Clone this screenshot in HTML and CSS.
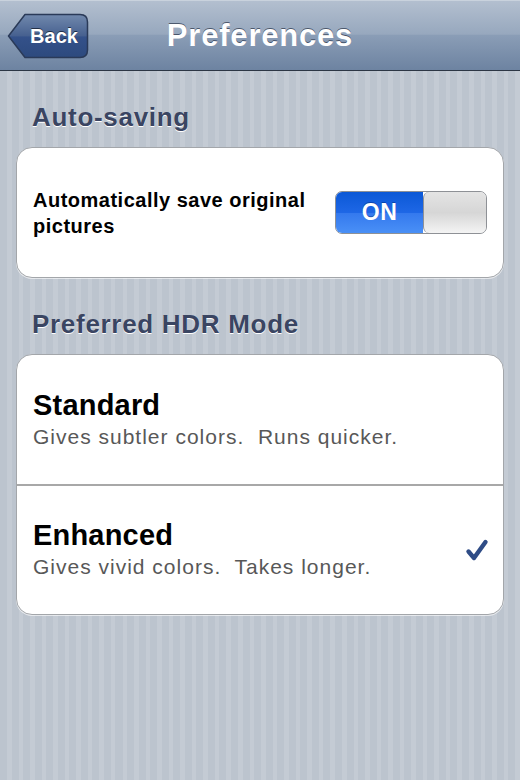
FILE: index.html
```html
<!DOCTYPE html>
<html lang="en">
<head>
  <meta charset="UTF-8">
  <meta name="viewport" content="width=device-width, initial-scale=1.0">
  <title>Preferences</title>
  <link rel="stylesheet" href="styles.css">
</head>
<body>
  <div class="navbar">
    <a href="#" class="back-button">
      <svg class="back-shape" width="84" height="48" viewBox="0 0 84 48">
        <defs>
          <linearGradient id="backFill" x1="0" y1="0" x2="0" y2="1">
            <stop offset="0" stop-color="#7189ad"/>
            <stop offset="0.5" stop-color="#46608f"/>
            <stop offset="0.52" stop-color="#34518a"/>
            <stop offset="1" stop-color="#2d4a7e"/>
          </linearGradient>
        </defs>
        <path d="M2.5 24 L19 2.5 H74 Q81.5 2.5 81.5 10 V38 Q81.5 45.5 74 45.5 H19 Z" fill="url(#backFill)" stroke="#2a3a58" stroke-width="1.5" stroke-linejoin="round"/>
      </svg>
      <span>Back</span>
    </a>
    <h1>Preferences</h1>
  </div>

  <div class="content">
    <h2 class="section-title">Auto-saving</h2>
    <div class="group">
      <div class="row switch-row">
        <div class="row-label">Automatically save original pictures</div>
        <div class="switch">
          <div class="switch-on">ON</div>
          <div class="switch-knob"></div>
        </div>
      </div>
    </div>

    <h2 class="section-title">Preferred HDR Mode</h2>
    <div class="group">
      <div class="row option">
        <div class="option-text">
          <div class="option-title">Standard</div>
          <div class="option-sub">Gives subtler colors.&nbsp; Runs quicker.</div>
        </div>
      </div>
      <div class="row option">
        <div class="option-text">
          <div class="option-title">Enhanced</div>
          <div class="option-sub">Gives vivid colors.&nbsp; Takes longer.</div>
        </div>
        <svg class="check" width="24" height="24" viewBox="0 0 24 24">
          <path d="M3.5 13.5 L9 20 L20.5 4" fill="none" stroke="#2f4c86" stroke-width="4.4" stroke-linecap="round" stroke-linejoin="round"/>
        </svg>
      </div>
    </div>
  </div>
</body>
</html>
```

FILE: styles.css
```css
body {
  margin: 0;
  width: 520px;
  min-height: 780px;
  font-family: 'Liberation Sans', Arial, sans-serif;
  background: repeating-linear-gradient(90deg, #bcc4ce 0, #bcc4ce 7px, #c4cbd4 7px, #c4cbd4 11.55px);
}

.navbar {
  position: relative;
  height: 71px;
  display: flex;
  align-items: center;
  justify-content: center;
  background: linear-gradient(to bottom, #b3bfcf 0, #97a8be 48%, #8a9db6 50%, #6d83a1 100%);
  border-top: 1px solid #c9d2dd;
  border-bottom: 1px solid #2c3644;
  box-sizing: border-box;
}

.navbar h1 {
  margin: 0;
  color: #fff;
  font-size: 31px;
  font-weight: bold;
  letter-spacing: 0.8px;
  text-shadow: 0 -1px 0 rgba(40, 50, 70, 0.7);
}

.back-button {
  position: absolute;
  left: 6px;
  top: 11px;
  width: 84px;
  height: 48px;
  display: flex;
  align-items: center;
  justify-content: center;
  padding-left: 12px;
  box-sizing: border-box;
  color: #fff;
  text-decoration: none;
  font-size: 20px;
  font-weight: bold;
  text-shadow: 0 -1px 0 rgba(20, 30, 50, 0.8);
}

.back-shape {
  position: absolute;
  left: 0;
  top: 0;
}

.back-button span {
  position: relative;
}

.content {
  padding: 0 16px 40px;
}

.section-title {
  margin: 0;
  padding: 31px 0 0 16px;
  margin-bottom: 15px;
  line-height: 30px;
  font-size: 26px;
  font-weight: bold;
  letter-spacing: 0.7px;
  color: #3a4562;
  text-shadow: 0 1px 0 #fff;
}

.group {
  background: #fff;
  border: 1px solid #a3a6aa;
  border-radius: 16px;
  box-shadow: 0 1px 0 rgba(255, 255, 255, 0.6);
  overflow: hidden;
}

.row {
  height: 129px;
  display: flex;
  align-items: center;
  padding: 0 16px;
}

.row + .row {
  border-top: 2px solid #a8a8a8;
  height: 128px;
}

.row-label {
  flex: 1;
  font-size: 20px;
  font-weight: bold;
  line-height: 26px;
  letter-spacing: 0.5px;
  color: #000;
  padding-right: 20px;
}

.switch {
  display: flex;
  width: 152px;
  height: 43px;
  border: 1px solid #8e9196;
  border-radius: 7px;
  overflow: hidden;
  box-sizing: border-box;
}

.switch-on {
  width: 87px;
  display: flex;
  align-items: center;
  justify-content: center;
  color: #fff;
  font-size: 23px;
  font-weight: bold;
  letter-spacing: 0.5px;
  text-shadow: 0 -1px 0 rgba(0, 40, 120, 0.5);
  background: linear-gradient(to bottom, #0b58d6 0, #1e67e6 50%, #3479ee 52%, #4a90f6 100%);
}

.switch-knob {
  flex: 1;
  border-left: 1px solid #8e9196;
  border-radius: 6px;
  background: linear-gradient(to bottom, #e4e4e4 0, #d6d6d6 50%, #f4f4f4 100%);
}

.option-text {
  flex: 1;
}

.option-title {
  font-size: 29px;
  font-weight: bold;
  line-height: 34px;
  letter-spacing: 0.2px;
  color: #000;
}

.option-sub {
  font-size: 21px;
  line-height: 30px;
  letter-spacing: 1px;
  color: #585858;
}

.check {
  margin-right: -2px;
}
```
